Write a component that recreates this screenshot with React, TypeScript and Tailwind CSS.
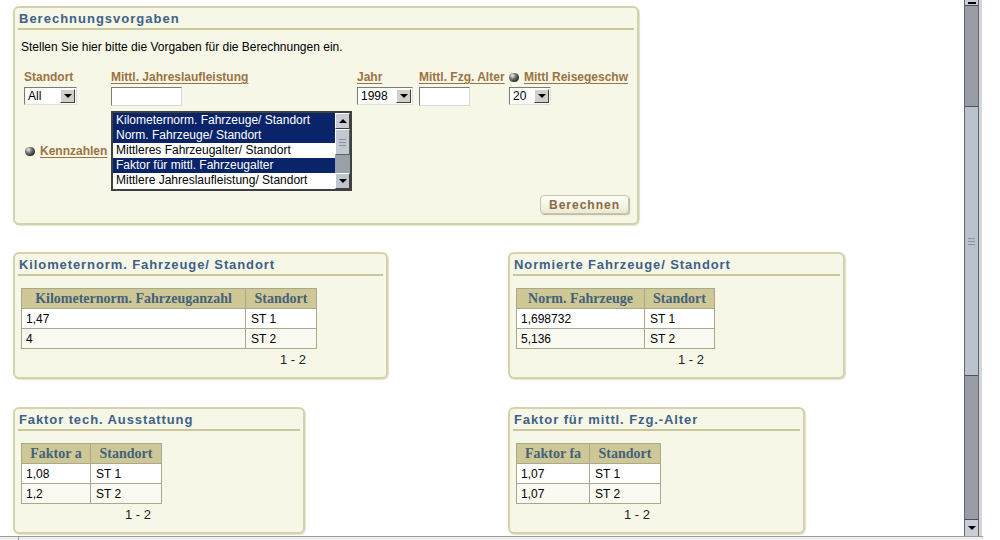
import React from 'react';

const sans = "font-['Liberation_Sans',Arial,sans-serif]";

const Ball = () => (
  <span className="inline-block w-[10px] h-[9px] rounded-full bg-[radial-gradient(circle_at_35%_30%,#f0f0f0_0%,#7a7a7a_35%,#1e1e1e_80%)]" />
);

const DropArrow = ({ dark = false }: { dark?: boolean }) => (
  <span
    className={`flex w-[15px] h-full items-center justify-center border border-t-white border-l-white border-r-[#404040] border-b-[#404040] ${
      dark ? 'bg-[#bfc5cd]' : 'bg-[#d4d0c8]'
    }`}
  >
    <span className="w-0 h-0 border-l-[4px] border-r-[4px] border-t-[4px] border-l-transparent border-r-transparent border-t-black" />
  </span>
);

const UpArrow = () => (
  <span className="flex w-[15px] h-full items-center justify-center border border-t-white border-l-white border-r-[#404040] border-b-[#404040] bg-[#c9ced6]">
    <span className="w-0 h-0 border-l-[4px] border-r-[4px] border-b-[4px] border-l-transparent border-r-transparent border-b-black" />
  </span>
);

const Select = ({ value, width }: { value: string; width: string }) => (
  <div className={`flex h-[18px] ${width} bg-white border border-t-[#7a7a7a] border-l-[#7a7a7a] border-r-[#e0e0e0] border-b-[#e0e0e0] p-[1px]`}>
    <span className="flex-1 pl-[2px] text-[12px] leading-[14px] text-black">{value}</span>
    <DropArrow />
  </div>
);

const TextBox = ({ width }: { width: string }) => (
  <div className={`h-[19px] ${width} bg-white border border-t-[#7a7a7a] border-l-[#7a7a7a] border-r-[#d8d8d8] border-b-[#d8d8d8]`} />
);

const Label = ({ children, underline = true }: { children: React.ReactNode; underline?: boolean }) => (
  <span className={`text-[12px] leading-[14px] font-bold text-[#9b7343] ${underline ? 'underline underline-offset-2' : ''}`}>
    {children}
  </span>
);

const kennzahlen = [
  { t: 'Kilometernorm. Fahrzeuge/ Standort', sel: true },
  { t: 'Norm. Fahrzeuge/ Standort', sel: true },
  { t: 'Mittleres Fahrzeugalter/ Standort', sel: false },
  { t: 'Faktor für mittl. Fahrzeugalter', sel: true },
  { t: 'Mittlere Jahreslaufleistung/ Standort', sel: false },
];

const Panel = ({
  title,
  width,
  height,
  children,
}: {
  title: string;
  width: string;
  height: string;
  children: React.ReactNode;
}) => (
  <div className={`${width} ${height} rounded-[6px] border-2 border-[#d4d1ab] bg-[#f7f7e7] px-[3px] shadow-[1px_1px_1px_#e4e2cc]`}>
    <div className="pt-[3px] pb-[1px] pl-[1px] border-b-2 border-[#cbc79d] text-[13px] leading-[16px] font-bold tracking-[0.9px] text-[#3d6185] whitespace-nowrap">
      {title}
    </div>
    {children}
  </div>
);

type Row = [string, string];

const DataTable = ({ head, rows, cols }: { head: Row; rows: Row[]; cols: [string, string] }) => (
  <div className="ml-[3px] mt-[12px] inline-block">
    <table className="border-collapse">
      <thead>
        <tr className="h-[20px] bg-[#cdc895]">
          <th className={`${cols[0]} border border-[#aaa88c] px-[4px] text-center font-['Liberation_Serif',serif] text-[14px] leading-[18px] font-bold text-[#45607a] whitespace-nowrap`}>
            {head[0]}
          </th>
          <th className={`${cols[1]} border border-[#aaa88c] px-[4px] text-center font-['Liberation_Serif',serif] text-[14px] leading-[18px] font-bold text-[#45607a] whitespace-nowrap`}>
            {head[1]}
          </th>
        </tr>
      </thead>
      <tbody>
        {rows.map((r, i) => (
          <tr key={i} className={`h-[20px] ${i === 0 ? 'bg-white' : 'bg-[#fafaf2]'}`}>
            <td className="border border-[#aaa88c] pl-[4px] text-[12px] leading-[14px] text-black">{r[0]}</td>
            <td className="border border-[#aaa88c] pl-[5px] text-[12px] leading-[14px] text-black">{r[1]}</td>
          </tr>
        ))}
      </tbody>
    </table>
    <div className="mt-[3px] pr-[11px] text-right text-[13px] leading-[15px] font-normal text-[#222]">1 - 2</div>
  </div>
);

export default function App() {
  return (
    <div className={`w-[1000px] h-[540px] overflow-hidden bg-white flex flex-col ${sans}`}>
      <div className="flex h-[536px]">
        <div className="w-[964px] h-full pt-[6px] pl-[13px]">
          {/* Berechnungsvorgaben */}
          <div className="w-[626px] h-[219px] rounded-[6px] border-2 border-[#d4d1ab] bg-[#f7f7e7] px-[3px] shadow-[1px_1px_1px_#e4e2cc]">
            <div className="pt-[3px] pb-[1px] pl-[1px] border-b-2 border-[#cbc79d] text-[13px] leading-[16px] font-bold tracking-[1px] text-[#3d6185]">
              Berechnungsvorgaben
            </div>
            <div className="mt-[10px] pl-[3px] text-[12px] leading-[14px] text-black">
              Stellen Sie hier bitte die Vorgaben für die Berechnungen ein.
            </div>

            <div className="mt-[16px] pl-[6px] flex">
              <div className="w-[87px] flex flex-col gap-[3px]">
                <Label underline={false}>Standort</Label>
                <Select value="All" width="w-[53px]" />
              </div>
              <div className="w-[246px] flex flex-col gap-[3px]">
                <Label>Mittl. Jahreslaufleistung</Label>
                <TextBox width="w-[71px]" />
              </div>
              <div className="w-[62px] flex flex-col gap-[3px]">
                <Label>Jahr</Label>
                <Select value="1998" width="w-[56px]" />
              </div>
              <div className="w-[90px] flex flex-col gap-[3px]">
                <Label>Mittl. Fzg. Alter</Label>
                <TextBox width="w-[51px]" />
              </div>
              <div className="flex flex-col gap-[3px]">
                <span className="flex items-center gap-[5px]">
                  <Ball />
                  <Label>Mittl Reisegeschw</Label>
                </span>
                <Select value="20" width="w-[42px]" />
              </div>
            </div>

            <div className="mt-[5px] pl-[7px] flex items-center">
              <div className="w-[86px] flex items-center gap-[5px]">
                <Ball />
                <Label>Kennzahlen</Label>
              </div>
              <div className="flex w-[241px] h-[80px] bg-white border-2 border-[#404040]">
                <div className="flex-1">
                  {kennzahlen.map((k) => (
                    <div
                      key={k.t}
                      className={`h-[15px] pl-[3px] text-[12px] leading-[15px] whitespace-nowrap ${
                        k.sel ? 'bg-[#0a246a] text-white' : 'bg-white text-black'
                      }`}
                    >
                      {k.t}
                    </div>
                  ))}
                </div>
                <div className="w-[15px] h-full flex flex-col bg-[#9aa0a8]">
                  <div className="h-[16px]">
                    <UpArrow />
                  </div>
                  <div className="h-[26px] bg-[#c3c9d2] border border-t-white border-l-white border-r-[#5a6068] border-b-[#5a6068] flex flex-col items-center justify-center gap-[2px]">
                    <span className="w-[7px] h-px bg-[#8a9099]" />
                    <span className="w-[7px] h-px bg-[#8a9099]" />
                    <span className="w-[7px] h-px bg-[#8a9099]" />
                  </div>
                  <div className="flex-1" />
                  <div className="h-[16px]">
                    <DropArrow dark />
                  </div>
                </div>
              </div>
            </div>

            <div className="mt-[4px] flex justify-end pr-[5px]">
              <button className="h-[19px] w-[89px] rounded-[4px] border border-[#c9c5a5] bg-[linear-gradient(#ffffff,#ebe8d2)] shadow-[1px_1px_1px_#b8b59a] text-[12px] font-bold tracking-[1px] text-[#8a6a40] leading-[16px]">
                Berechnen
              </button>
            </div>
          </div>

          {/* Result panels */}
          <div className="mt-[27px] grid grid-cols-[495px_auto] gap-y-[28px] items-start">
            <Panel title="Kilometernorm. Fahrzeuge/ Standort" width="w-[375px]" height="h-[127px]">
              <DataTable
                head={['Kilometernorm. Fahrzeuganzahl', 'Standort']}
                cols={['w-[224px]', 'w-[71px]']}
                rows={[
                  ['1,47', 'ST 1'],
                  ['4', 'ST 2'],
                ]}
              />
            </Panel>
            <Panel title="Normierte Fahrzeuge/ Standort" width="w-[337px]" height="h-[127px]">
              <DataTable
                head={['Norm. Fahrzeuge', 'Standort']}
                cols={['w-[128px]', 'w-[70px]']}
                rows={[
                  ['1,698732', 'ST 1'],
                  ['5,136', 'ST 2'],
                ]}
              />
            </Panel>
            <Panel title="Faktor tech. Ausstattung" width="w-[292px]" height="h-[127px]">
              <DataTable
                head={['Faktor a', 'Standort']}
                cols={['w-[69px]', 'w-[71px]']}
                rows={[
                  ['1,08', 'ST 1'],
                  ['1,2', 'ST 2'],
                ]}
              />
            </Panel>
            <Panel title="Faktor für mittl. Fzg.-Alter" width="w-[297px]" height="h-[127px]">
              <DataTable
                head={['Faktor fa', 'Standort']}
                cols={['w-[73px]', 'w-[71px]']}
                rows={[
                  ['1,07', 'ST 1'],
                  ['1,07', 'ST 2'],
                ]}
              />
            </Panel>
          </div>
        </div>

        {/* Window scrollbar */}
        <div className="w-[15px] h-full flex flex-col bg-[#999ea6] border-x border-[#5f656d]">
          <div className="h-[6px] bg-[#c9ced6] border-b border-[#4a4f56] flex justify-center items-end pb-[1px]">
            <span className="w-[8px] h-[2px] bg-black" />
          </div>
          <div className="h-[100px]" />
          <div className="h-[270px] bg-[#bac2cd] border-y border-[#4e545c] flex flex-col items-center justify-center gap-[2px]">
            <span className="w-[7px] h-px bg-[#8c929b]" />
            <span className="w-[7px] h-px bg-[#8c929b]" />
            <span className="w-[7px] h-px bg-[#8c929b]" />
          </div>
          <div className="flex-1" />
          <div className="h-[17px] bg-[#c9ced6] border-t border-[#4a4f56] flex items-center justify-center">
            <span className="w-0 h-0 border-l-[4px] border-r-[4px] border-t-[4px] border-l-transparent border-r-transparent border-t-black" />
          </div>
        </div>
        <div className="w-[3px] h-full bg-[#d6d6d6]" />
        <div className="flex-1 bg-white" />
      </div>
      <div className="h-px w-[983px] bg-[#9a9a9a]" />
      <div className="h-[3px] w-[983px] flex bg-[#eeeeee]">
        <span className="ml-[18px] w-px h-full bg-[#9a9a9a]" />
      </div>
    </div>
  );
}
